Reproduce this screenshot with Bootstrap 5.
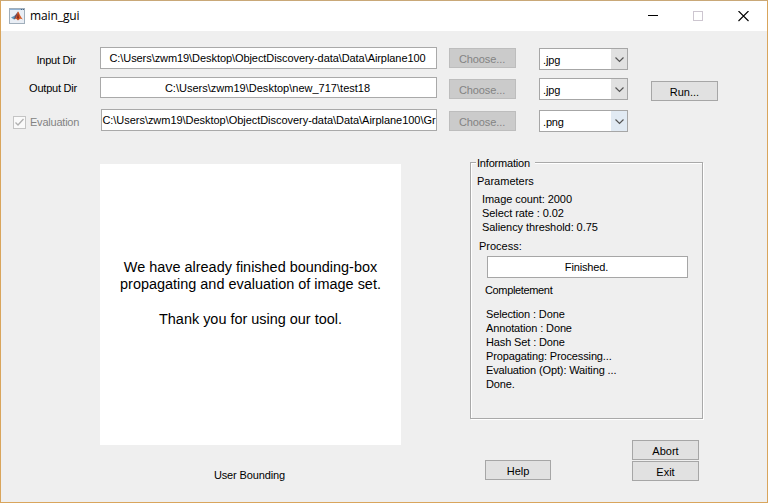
<!DOCTYPE html>
<html lang="en">
<head>
<meta charset="utf-8">
<title>main_gui</title>
<link href="https://cdn.jsdelivr.net/npm/bootstrap@5.3.0/dist/css/bootstrap.min.css" rel="stylesheet">
<style>
body{font-family:"Liberation Sans",Arial,sans-serif;font-size:11px;line-height:14px;color:#000;background:#efefef}
.window{width:768px;height:503px;border:1px solid #d9a55c;border-top-color:#c9a878;background:#efefef}
.titlebar{height:30px;flex:none;padding-left:8px}
.title-text{font-family:"Open Sans","Noto Sans",sans-serif;font-size:12px;margin-left:5px;letter-spacing:-.1px}
.titlebar .controls{margin-right:18px;gap:35px}
.form-area{height:131px;flex:none}
.stack-labels{width:99px;padding-top:22px;letter-spacing:-.22px}
.stack-labels .l1{margin-right:24px}
.stack-labels .l2{margin:14px 23px 0 0}
.stack-labels .l3{margin:20px 0 0 12px;color:#838383}
.check-frame{width:13px;height:13px;border:1px solid #c4c4c4;background:#fafafa;margin-right:4px}
.stack-inputs{width:337px;padding-top:16px}
.form-area .form-control{font-size:11px;line-height:14px;color:#000;border:1px solid #a9a9a9;border-radius:0;padding:0 2px 0 0;text-align:center;height:22px;width:337px;letter-spacing:-.07px}
.form-area .i2{height:21px;margin-top:8px;letter-spacing:.01px}
.form-area .i3{margin:11px 0 0 1px;width:336px;padding:0;letter-spacing:-.04px}
.btn.native{font-size:11px;line-height:14px;height:20px;width:67px;padding:2px 0 0;border:1px solid #a6a6a6;border-radius:0;background:#e1e1e1;color:#000;letter-spacing:0}
.btn.native:disabled{background:#cbcbcb;border-color:#bdbdbd;color:#838383;opacity:1;letter-spacing:-.1px;padding-right:1px}
.stack-choose{margin-left:12px;padding-top:17px}
.stack-choose .b2{margin-top:11px}
.stack-choose .b3{margin-top:12px}
.stack-types{margin-left:23px;padding-top:17px}
.picker{width:89px;height:22px;border:1px solid #a6a6a6;background:#fff;padding-left:3px}
.picker .arrow{width:16px;background:#e1e1e1;padding-top:1px}
.picker .arrow.hot{background:#e1eaf3}
.stack-types .s2{margin-top:8px}
.stack-types .s3{margin-top:10px}
.picker-text{padding-top:2px;letter-spacing:-.15px}
.stack-run{margin-left:23px;padding-top:50px}
.left-pane{width:301px;margin:2px 0 0 99px}
.canvas{height:281px;background:#fff;font-size:14.45px;line-height:17.3px;padding-top:95px}
.caption-text{margin-top:23px;padding-right:2px;letter-spacing:-.12px}
.right-pane{width:234px;margin-left:69px}
.group{width:233px;height:257px;border:1px solid #a9a9a9;box-shadow:1px 1px 0 #fff,inset 1px 1px 0 #fff;padding:0 0 0 6px}
.group legend{float:none;width:auto;font-size:11px;line-height:14px;margin:-7px 0 0 -1px;padding:0 5px 0 1px;background:#efefef;align-self:flex-start;letter-spacing:-.2px}
.params{margin:4px 0 0 5px;letter-spacing:-.07px}
.process-label{margin:5px 0 0 2px}
.status{width:201px;height:22px;border:1px solid #a6a6a6;background:#fff;margin:3px 0 0 10px;padding-right:2px;letter-spacing:-.15px}
.complete-label{margin:5px 0 0 8px;letter-spacing:-.35px}
.log{margin:10px 0 0 9px;letter-spacing:-.13px}
.actions{margin:21px 0 0 15px}
.actions .help{margin-top:20px;width:66px}
.actions .pair{margin-left:81px;gap:1px}
</style>
</head>
<body class="m-0 overflow-hidden">
<div class="window d-flex flex-column">
  <header class="titlebar bg-white d-flex align-items-center">
    <svg width="16" height="16" viewBox="0 0 16 16"><rect x=".5" y=".5" width="15" height="15" fill="#e9eef5" stroke="#a0aebb"/><path d="M1 1.500h14" stroke="#91b2d4"/><path d="M12 1.500h1M14 1.500h1" stroke="#52677d"/><path d="M2 9.500l4-2 2 2-3 2z" fill="#5c93b8"/><path d="M6 7.500l3-4-1 6-3 2z" fill="#6d4d60"/><path d="M9 3.500c1 0 2 5 5 8-2-1-3-1-5 1-1-1-2-2-3-1 2-3 2-6 3-8z" fill="#d65b25"/><path d="M9 4.500l1 5-1 2-1-2z" fill="#8c291c"/></svg>
    <span class="title-text">main_gui</span>
    <div class="controls ms-auto d-flex align-items-center">
      <svg width="10" height="11" viewBox="0 0 10 11"><path d="M0 4.500h10" stroke="#000"/></svg>
      <svg width="10" height="11" viewBox="0 0 10 11"><rect x=".5" y=".5" width="9" height="9" fill="none" stroke="#cdc6d0"/></svg>
      <svg width="11" height="11" viewBox="0 0 11 11"><path d="M.5 0l10 10M10.500 0l-10 10" stroke="#000" stroke-width="1.100"/></svg>
    </div>
  </header>

  <section class="form-area d-flex align-items-start">
    <div class="stack-labels d-flex flex-column align-items-end">
      <span class="l1">Input Dir</span>
      <span class="l2">Output Dir</span>
      <div class="l3 d-flex align-items-center align-self-start"><span class="check-frame d-flex"><svg width="11" height="11" viewBox="0 0 11 11"><path d="M1.500 5.500l2.500 2.500 5.500-6" fill="none" stroke="#b0b0b0" stroke-width="1.300"/></svg></span>Evaluation</div>
    </div>
    <div class="stack-inputs d-flex flex-column">
      <input class="form-control" aria-label="Input Dir" value="C:\Users\zwm19\Desktop\ObjectDiscovery-data\Data\Airplane100">
      <input class="form-control i2" aria-label="Output Dir" value="C:\Users\zwm19\Desktop\new_717\test18">
      <input class="form-control i3" aria-label="Evaluation Dir" value="C:\Users\zwm19\Desktop\ObjectDiscovery-data\Data\Airplane100\Gr">
    </div>
    <div class="stack-choose d-flex flex-column">
      <button class="btn native" disabled>Choose...</button>
      <button class="btn native b2" disabled>Choose...</button>
      <button class="btn native b3" disabled>Choose...</button>
    </div>
    <div class="stack-types d-flex flex-column">
      <div class="picker d-flex justify-content-between"><span class="picker-text align-self-center">.jpg</span><span class="arrow d-flex align-items-center justify-content-center"><svg width="9" height="6" viewBox="0 0 9 6"><path d="M.5.5l4 4 4-4" fill="none" stroke="#555" stroke-width="1.200"/></svg></span></div>
      <div class="picker s2 d-flex justify-content-between"><span class="picker-text align-self-center">.jpg</span><span class="arrow d-flex align-items-center justify-content-center"><svg width="9" height="6" viewBox="0 0 9 6"><path d="M.5.5l4 4 4-4" fill="none" stroke="#555" stroke-width="1.200"/></svg></span></div>
      <div class="picker s3 d-flex justify-content-between"><span class="picker-text align-self-center">.png</span><span class="arrow hot d-flex align-items-center justify-content-center"><svg width="9" height="6" viewBox="0 0 9 6"><path d="M.5.5l4 4 4-4" fill="none" stroke="#555" stroke-width="1.200"/></svg></span></div>
    </div>
    <div class="stack-run"><button class="btn native d-block">Run...</button></div>
  </section>

  <main class="d-flex align-items-start">
    <div class="left-pane text-center">
      <div class="canvas">We have already finished bounding-box<br>propagating and evaluation of image set.<br><br>Thank you for using our tool.</div>
      <div class="caption-text">User Bounding</div>
    </div>
    <div class="right-pane">
      <div class="group d-flex flex-column" role="group">
        <legend>Information</legend>
        <div class="parameters-label mt-1">Parameters</div>
        <div class="params">Image count: 2000<br>Select rate : 0.02<br>Saliency threshold: 0.75</div>
        <div class="process-label">Process:</div>
        <div class="status d-flex align-items-center justify-content-center">Finished.</div>
        <div class="complete-label">Completement</div>
        <div class="log">Selection : Done<br>Annotation : Done<br>Hash Set : Done<br>Propagating: Processing...<br>Evaluation (Opt): Waiting ...<br>Done.</div>
      </div>
      <div class="actions d-flex align-items-start">
        <button class="btn native help">Help</button>
        <div class="pair d-flex flex-column">
          <button class="btn native">Abort</button>
          <button class="btn native">Exit</button>
        </div>
      </div>
    </div>
  </main>
</div>
<script src="https://cdn.jsdelivr.net/npm/bootstrap@5.3.0/dist/js/bootstrap.bundle.min.js"></script>
</body>
</html>
